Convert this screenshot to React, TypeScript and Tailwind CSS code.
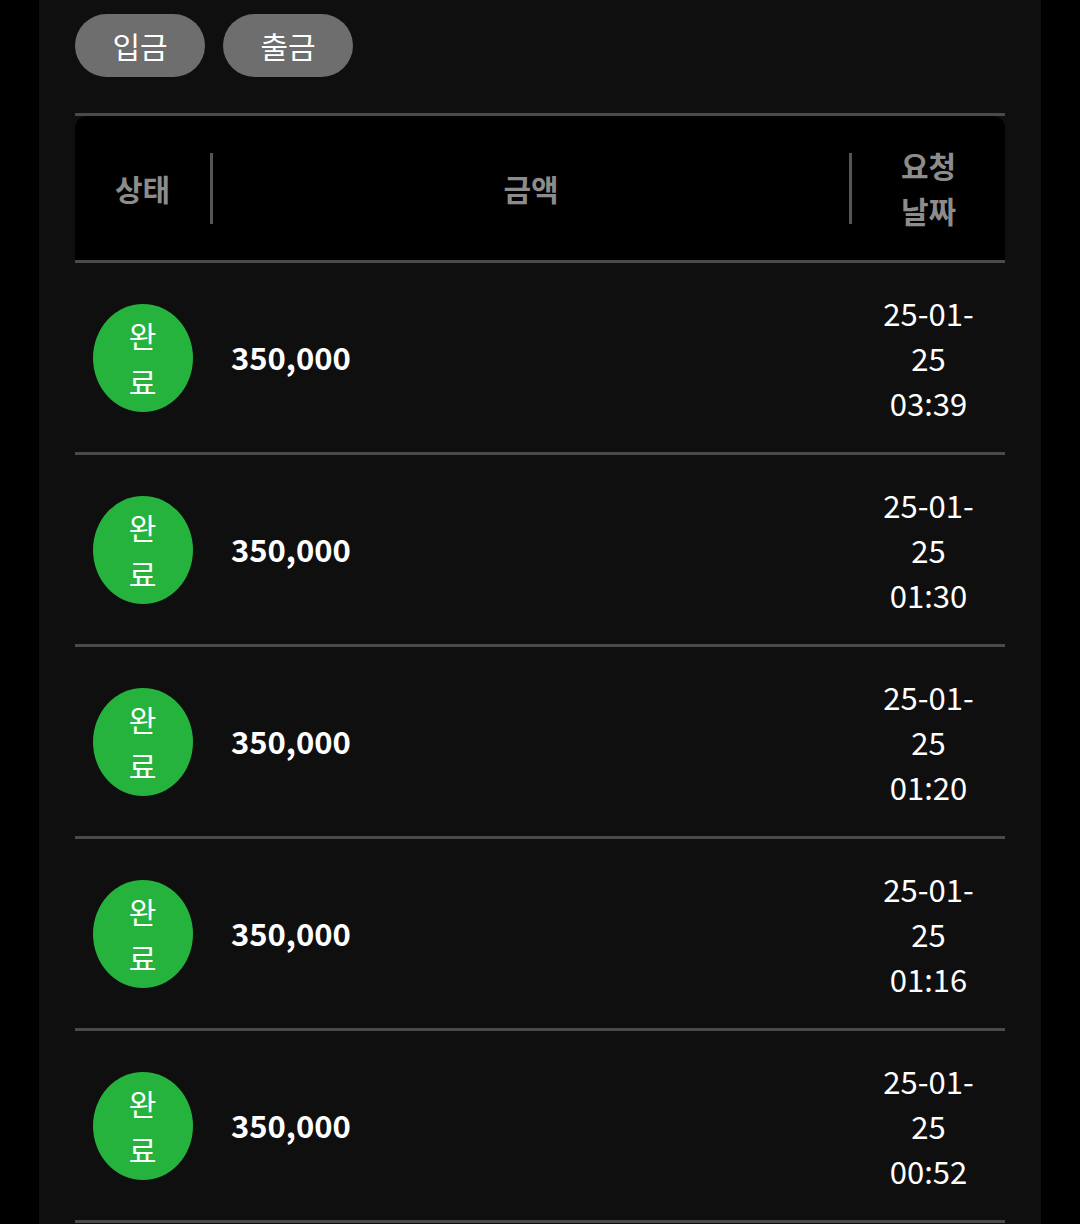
const rows = [
  { amount: "350,000", date: "25-01-", day: "25", time: "03:39" },
  { amount: "350,000", date: "25-01-", day: "25", time: "01:30" },
  { amount: "350,000", date: "25-01-", day: "25", time: "01:20" },
  { amount: "350,000", date: "25-01-", day: "25", time: "01:16" },
  { amount: "350,000", date: "25-01-", day: "25", time: "00:52" },
];

function TabButton({ label }: { label: string }) {
  return (
    <button className="flex h-[63px] w-[130px] items-center justify-center rounded-full bg-[#6e6e6e] text-[30px] text-white">
      {label}
    </button>
  );
}

function HistoryRow({ amount, date, day, time }: (typeof rows)[number]) {
  return (
    <div className="flex h-[192px] items-center border-b-[3px] border-[#4a4a4a]">
      <div className="flex w-[135px] shrink-0 justify-center">
        <div className="flex h-[108px] w-[100px] flex-col items-center justify-center rounded-[50%] bg-[#25b33e] text-[30px] leading-[46px] text-white">
          <span>완</span>
          <span>료</span>
        </div>
      </div>
      <div className="flex-1 pl-[21px] text-[31px] font-bold text-white">{amount}</div>
      <div className="flex w-[153px] shrink-0 flex-col items-center text-[31px] leading-[45px] text-white">
        <span>{date}</span>
        <span>{day}</span>
        <span>{time}</span>
      </div>
    </div>
  );
}

export default function App() {
  return (
    <div
      className="flex min-h-[1224px] justify-center bg-black"
      style={{ fontFamily: '"Noto Sans CJK KR", "Noto Sans", sans-serif' }}
    >
      <div className="w-[1002px] bg-[#0f0f0f] px-[36px] pt-[14px]">
        <div className="flex gap-[18px]">
          <TabButton label="입금" />
          <TabButton label="출금" />
        </div>

        <div className="mt-[36px] border-t-[3px] border-[#4a4a4a]">
          <div className="flex h-[147px] items-center rounded-t-xl border-b-[3px] border-[#4a4a4a] bg-black text-[30px] font-bold text-[#8c8c8c]">
            <div className="flex w-[135px] shrink-0 justify-center">상태</div>
            <div className="flex h-[71px] flex-1 items-center justify-center border-x-[3px] border-[#555]">
              금액
            </div>
            <div className="flex w-[153px] shrink-0 flex-col items-center leading-[45px]">
              <span>요청</span>
              <span>날짜</span>
            </div>
          </div>
          {rows.map((row, i) => (
            <HistoryRow key={i} {...row} />
          ))}
        </div>
      </div>
    </div>
  );
}
